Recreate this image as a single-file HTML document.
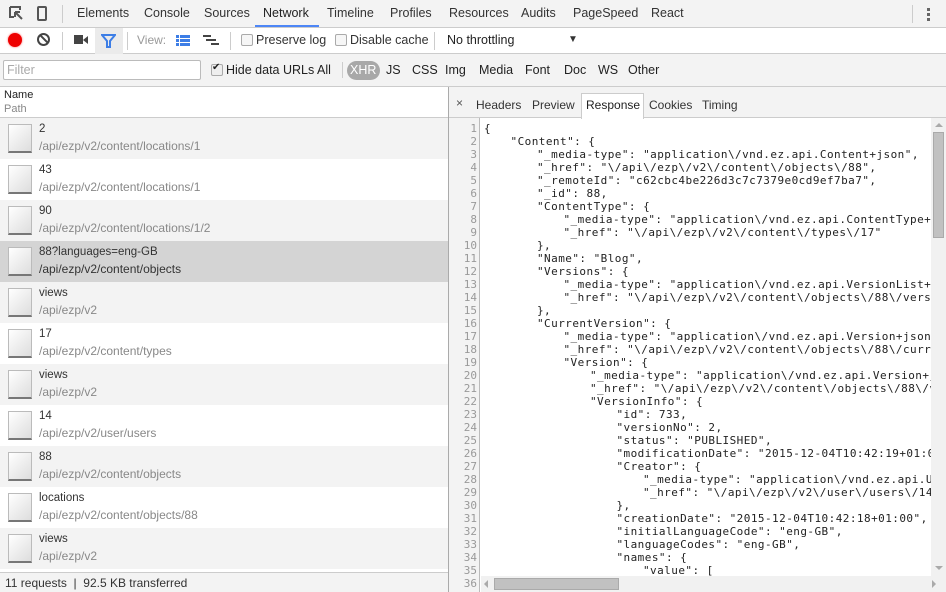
<!DOCTYPE html>
<html><head><meta charset="utf-8"><style>
*{margin:0;padding:0;box-sizing:border-box}
body{width:946px;height:592px;overflow:hidden;background:#fff;font-family:"Liberation Sans","DejaVu Sans",sans-serif;font-size:12px;color:#222;position:relative}
.a{position:absolute}
.tabs{left:0;top:0;width:946px;height:28px;background:#f3f3f3;border-bottom:1px solid #ccc}
.tabs span{position:absolute;top:6px;font-size:12.5px;color:#333}
.tb{left:0;top:28px;width:946px;height:26px;background:#fff;border-bottom:1px solid #ccc}
.fr{left:0;top:54px;width:946px;height:33px;background:#f3f3f3;border-bottom:1px solid #ccc}
.sep{position:absolute;width:1px;background:#ccc}
.cb{position:absolute;width:12px;height:12px;border:1px solid #aaa;border-radius:2px;background:#f6f6f6}
.row{position:absolute;left:0;width:448px;height:41px}
.row .ic{position:absolute;left:8px;top:6px;width:24px;height:29px;border:1px solid #bbb;border-bottom:2px solid #777;background:linear-gradient(135deg,#fff,#ddd)}
.row .n{position:absolute;left:39px;top:5px;font-size:11.5px;color:#333}
.row .p{position:absolute;left:39px;top:21px;font-size:12px;color:#888}
.g{background:#f3f3f3}.s{background:#d4d4d4}.s .p{color:#333}
pre{font-family:"DejaVu Sans Mono","Liberation Mono",monospace;font-size:11px;line-height:13px}
#code .t{letter-spacing:0.45px}
</style></head><body>
<div class="a tabs">
 <svg class="a" style="left:9px;top:6px" width="14" height="14" viewBox="0 0 14 14"><path d="M1 1h10v3M1 1v10h4" stroke="#555" stroke-width="2" fill="none"/><path d="M6 6l7 7M6 6h5M6 6v5" stroke="#555" stroke-width="2" fill="none"/></svg>
 <div class="a" style="left:37px;top:6px;width:10px;height:15px;border:2px solid #555;border-radius:2px"></div>
 <div class="sep" style="left:62px;top:5px;height:18px"></div>
 <span style="left:77px">Elements</span><span style="left:144px">Console</span><span style="left:204px">Sources</span>
 <span style="left:263px;color:#222">Network</span><span style="left:327px">Timeline</span><span style="left:390px">Profiles</span>
 <span style="left:449px">Resources</span><span style="left:521px">Audits</span><span style="left:573px">PageSpeed</span><span style="left:651px">React</span>
 <div class="a" style="left:255px;top:25px;width:64px;height:2px;background:#4d86f6"></div>
 <div class="sep" style="left:912px;top:5px;height:18px"></div>
 <div class="a" style="left:927px;top:8px;width:3px;height:3px;background:#666"></div>
 <div class="a" style="left:927px;top:13px;width:3px;height:3px;background:#666"></div>
 <div class="a" style="left:927px;top:18px;width:3px;height:3px;background:#666"></div>
</div>
<div class="a tb">
 <div class="a" style="left:8px;top:5px;width:14px;height:14px;border-radius:50%;background:#e00;box-shadow:0 0 2px #f66"></div>
 <div class="a" style="left:37px;top:5px;width:13px;height:13px;border-radius:50%;border:2px solid #444"></div>
 <div class="a" style="left:39px;top:10px;width:10px;height:2px;background:#444;transform:rotate(45deg)"></div>
 <div class="sep" style="left:62px;top:4px;height:18px"></div>
 <div class="a" style="left:74px;top:7px;width:9px;height:9px;background:#444"></div>
 <div class="a" style="left:83px;top:8px;border-right:5px solid #444;border-top:4px solid transparent;border-bottom:4px solid transparent;width:0;height:0;"></div>
 <div class="a" style="left:95px;top:0;width:28px;height:26px;background:#ebebeb"></div>
 <svg class="a" style="left:101px;top:6px" width="15" height="14" viewBox="0 0 15 14"><path d="M1 1h13L9 7v6H6V7z" fill="none" stroke="#3d7ee6" stroke-width="2"/></svg>
 <div class="sep" style="left:127px;top:4px;height:18px"></div>
 <span class="a" style="left:137px;top:5px;color:#999">View:</span>
 <div class="a" style="left:176px;top:7px;width:14px;height:11px;background:repeating-linear-gradient(#3d7ee6 0 3px,transparent 3px 4px)"></div>
 <div class="a" style="left:179px;top:7px;width:1px;height:11px;background:#fff"></div>
 <div class="a" style="left:203px;top:7px;width:8px;height:2px;background:#444"></div>
 <div class="a" style="left:206px;top:11px;width:10px;height:2px;background:#444"></div>
 <div class="a" style="left:211px;top:15px;width:8px;height:2px;background:#444"></div>
 <div class="sep" style="left:230px;top:4px;height:18px"></div>
 <div class="cb" style="left:241px;top:6px"></div><span class="a" style="left:256px;top:5px;font-size:12.5px;color:#333">Preserve log</span>
 <div class="cb" style="left:335px;top:6px"></div><span class="a" style="left:350px;top:5px;font-size:12.5px;color:#333">Disable cache</span>
 <div class="sep" style="left:434px;top:4px;height:18px"></div>
 <span class="a" style="left:447px;top:5px;font-size:12.5px">No throttling</span>
 <span class="a" style="left:568px;top:6px;font-size:10px;color:#333">▼</span>
</div>
<div class="a fr">
 <div class="a" style="left:3px;top:6px;width:198px;height:20px;background:#fff;border:1px solid #bbb;border-radius:2px"></div>
 <span class="a" style="left:7px;top:9px;color:#aaa;font-size:12.5px">Filter</span>
 <div class="cb" style="left:211px;top:10px;background:#eee"></div><span class="a" style="left:212px;top:8px;font-size:10px">✔</span>
 <span class="a" style="left:226px;top:9px;font-size:12.5px">Hide data URLs</span>
 <span class="a" style="left:317px;top:9px;font-size:12.5px">All</span>
 <div class="sep" style="left:342px;top:8px;height:16px"></div>
 <div class="a" style="left:347px;top:7px;width:33px;height:19px;border-radius:10px;background:#a8a8a8"></div>
 <span class="a" style="left:350px;top:9px;font-size:12.5px;color:#fff">XHR</span>
 <span class="a" style="left:386px;top:9px;font-size:12.5px">JS</span>
 <span class="a" style="left:412px;top:9px;font-size:12.5px">CSS</span>
 <span class="a" style="left:445px;top:9px;font-size:12.5px">Img</span>
 <span class="a" style="left:479px;top:9px;font-size:12.5px">Media</span>
 <span class="a" style="left:525px;top:9px;font-size:12.5px">Font</span>
 <span class="a" style="left:564px;top:9px;font-size:12.5px">Doc</span>
 <span class="a" style="left:598px;top:9px;font-size:12.5px">WS</span>
 <span class="a" style="left:628px;top:9px;font-size:12.5px">Other</span>
</div>
<div class="a" style="left:0;top:87px;width:448px;height:31px;border-bottom:1px solid #ccc;background:#fff">
 <span class="a" style="left:4px;top:2px;font-size:11px">Name</span>
 <span class="a" style="left:4px;top:16px;font-size:11px;color:#888">Path</span>
</div>
<div class="row g" style="top:118px"><div class="ic"></div><span class="n">2</span><span class="p">/api/ezp/v2/content/locations/1</span></div>
<div class="row" style="top:159px"><div class="ic"></div><span class="n">43</span><span class="p">/api/ezp/v2/content/locations/1</span></div>
<div class="row g" style="top:200px"><div class="ic"></div><span class="n">90</span><span class="p">/api/ezp/v2/content/locations/1/2</span></div>
<div class="row s" style="top:241px"><div class="ic"></div><span class="n">88?languages=eng-GB</span><span class="p">/api/ezp/v2/content/objects</span></div>
<div class="row g" style="top:282px"><div class="ic"></div><span class="n">views</span><span class="p">/api/ezp/v2</span></div>
<div class="row" style="top:323px"><div class="ic"></div><span class="n">17</span><span class="p">/api/ezp/v2/content/types</span></div>
<div class="row g" style="top:364px"><div class="ic"></div><span class="n">views</span><span class="p">/api/ezp/v2</span></div>
<div class="row" style="top:405px"><div class="ic"></div><span class="n">14</span><span class="p">/api/ezp/v2/user/users</span></div>
<div class="row g" style="top:446px"><div class="ic"></div><span class="n">88</span><span class="p">/api/ezp/v2/content/objects</span></div>
<div class="row" style="top:487px"><div class="ic"></div><span class="n">locations</span><span class="p">/api/ezp/v2/content/objects/88</span></div>
<div class="row g" style="top:528px"><div class="ic"></div><span class="n">views</span><span class="p">/api/ezp/v2</span></div>
<div class="a" style="left:0;top:572px;width:448px;height:20px;background:#f3f3f3;border-top:1px solid #ccc">
 <span class="a" style="left:5px;top:3px;font-size:12px;color:#333">11 requests &nbsp;|&nbsp; 92.5 KB transferred</span>
</div>
<div class="a" style="left:448px;top:87px;width:1px;height:505px;background:#aaa"></div>
<div class="a" style="left:449px;top:87px;width:497px;height:31px;background:#f3f3f3;border-bottom:1px solid #ccc">
 <span class="a" style="left:7px;top:9px;font-size:12px;color:#555">×</span>
 <span class="a" style="left:27px;top:11px;font-size:12px;color:#333">Headers</span>
 <span class="a" style="left:83px;top:11px;font-size:12px;color:#333">Preview</span>
 <div class="a" style="left:132px;top:6px;width:63px;height:26px;background:#fff;border:1px solid #ccc;border-bottom:none"></div>
 <span class="a" style="left:137px;top:11px;font-size:12px;color:#222">Response</span>
 <span class="a" style="left:200px;top:11px;font-size:12px;color:#333">Cookies</span>
 <span class="a" style="left:253px;top:11px;font-size:12px;color:#333">Timing</span>
</div>
<div class="a" style="left:449px;top:118px;width:31px;height:474px;background:#f3f3f3;border-right:1px solid #bbb"></div>
<pre class="a" style="left:449px;top:122px;width:28px;text-align:right;color:#999;font-size:11px"><script>for(let i=1;i<=36;i++)document.write(i+"\n")</script></pre>
<pre id="code" class="a" style="left:484px;top:122px;width:447px;height:454px;overflow:hidden;color:#222">{
    "Content": {
        "_media-type": "application\/vnd.ez.api.Content+json",
        "_href": "\/api\/ezp\/v2\/content\/objects\/88",
        "_remoteId": "c62cbc4be226d3c7c7379e0cd9ef7ba7",
        "_id": 88,
        "ContentType": {
            "_media-type": "application\/vnd.ez.api.ContentType+json",
            "_href": "\/api\/ezp\/v2\/content\/types\/17"
        },
        "Name": "Blog",
        "Versions": {
            "_media-type": "application\/vnd.ez.api.VersionList+json",
            "_href": "\/api\/ezp\/v2\/content\/objects\/88\/versions"
        },
        "CurrentVersion": {
            "_media-type": "application\/vnd.ez.api.Version+json",
            "_href": "\/api\/ezp\/v2\/content\/objects\/88\/currentversion",
            "Version": {
                "_media-type": "application\/vnd.ez.api.Version+json",
                "_href": "\/api\/ezp\/v2\/content\/objects\/88\/versions\/2",
                "VersionInfo": {
                    "id": 733,
                    "versionNo": 2,
                    "status": "PUBLISHED",
                    "modificationDate": "2015-12-04T10:42:19+01:00",
                    "Creator": {
                        "_media-type": "application\/vnd.ez.api.User+json",
                        "_href": "\/api\/ezp\/v2\/user\/users\/14"
                    },
                    "creationDate": "2015-12-04T10:42:18+01:00",
                    "initialLanguageCode": "eng-GB",
                    "languageCodes": "eng-GB",
                    "names": {
                        "value": [
</pre>
<script>
(function(){var p=document.getElementById('code');p.innerHTML=p.innerHTML.split('\n').map(function(l){var m=l.match(/^( *)(.*)$/);return m[1]+(m[2]?'<span class="t">'+m[2]+'</span>':'');}).join('\n');})();
</script>
<div class="a" style="left:931px;top:118px;width:15px;height:458px;background:#f1f1f1"></div>
<div class="a" style="left:935px;top:123px;border-bottom:4px solid #aaa;border-left:4px solid transparent;border-right:4px solid transparent;width:0;height:0"></div>
<div class="a" style="left:933px;top:132px;width:11px;height:106px;background:#c1c1c1;border:1px solid #aaa"></div>
<div class="a" style="left:935px;top:566px;border-top:4px solid #aaa;border-left:4px solid transparent;border-right:4px solid transparent;width:0;height:0"></div>
<div class="a" style="left:481px;top:576px;width:465px;height:16px;background:#f1f1f1"></div>
<div class="a" style="left:484px;top:580px;border-right:4px solid #aaa;border-top:4px solid transparent;border-bottom:4px solid transparent;width:0;height:0"></div>
<div class="a" style="left:494px;top:578px;width:125px;height:12px;background:#c1c1c1;border:1px solid #aaa"></div>
<div class="a" style="left:932px;top:580px;border-left:4px solid #aaa;border-top:4px solid transparent;border-bottom:4px solid transparent;width:0;height:0"></div>
</body></html>
